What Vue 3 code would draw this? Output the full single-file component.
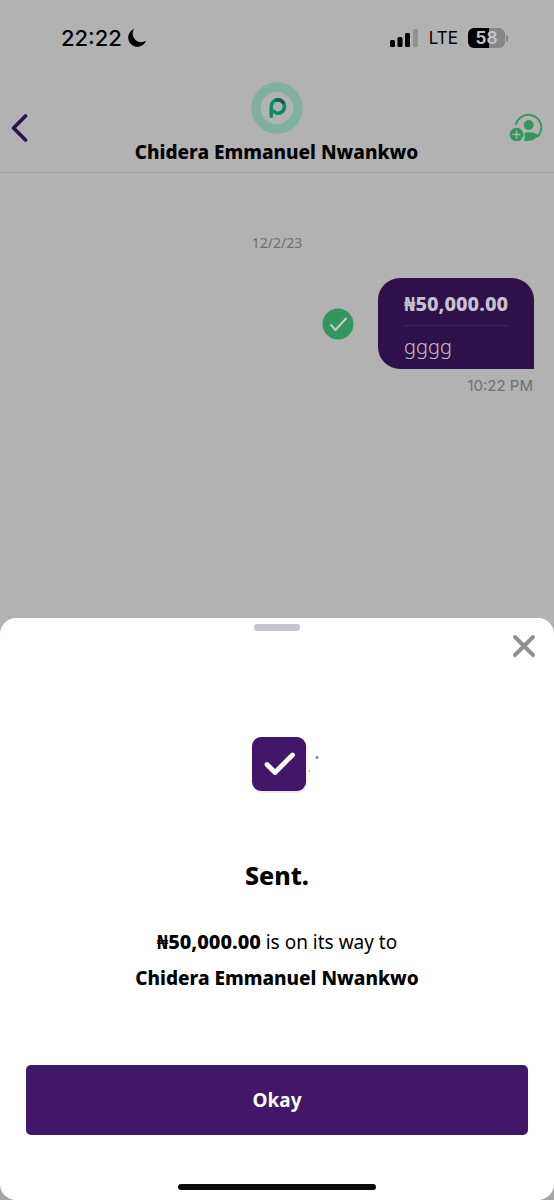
<script setup>
const recipient = 'Chidera Emmanuel Nwankwo'
const amount = '₦50,000.00'
</script>

<template>
  <div class="screen">
    <div class="status">
      <div class="clock">
        <span>22:22</span>
        <svg width="20" height="20" viewBox="0 0 20 20" aria-hidden="true">
          <path d="M7 1A9.200 9.200 0 1 0 19 12.800 8.600 8.600 0 0 1 7 1Z" fill="#000" />
        </svg>
      </div>
      <div class="signals">
        <svg width="30" height="20" viewBox="0 0 30 20" aria-hidden="true">
          <rect x="1" y="12" width="5" height="7" rx="1.5" />
          <rect x="8.500" y="9" width="5" height="10" rx="1.5" />
          <rect x="16" y="5" width="5" height="14" rx="1.5" />
          <rect x="24" y="1" width="5" height="18" rx="1.5" fill="#929292" />
        </svg>
        <span class="network">LTE</span>
        <div class="battery">
          <span class="cell">58</span>
          <span class="tip"></span>
        </div>
      </div>
    </div>

    <header class="header">
      <button class="icon-button" aria-label="Back">
        <svg width="18" height="28" viewBox="0 0 18 28">
          <path d="M15.500 2 3.500 14l12 12" fill="none" stroke="#2e114b" stroke-width="3.600" stroke-linecap="round" stroke-linejoin="round" />
        </svg>
      </button>
      <div class="person">
        <svg width="52" height="52" viewBox="0 0 52 52" aria-hidden="true">
          <circle cx="26" cy="26" r="21" fill="none" stroke="#80b0a2" stroke-width="9.500" />
          <path d="M20.300 34.300V24.500a6.600 6.700 0 1 1 6.600 6.700c-1.800 0-3-.7-3.800-1.700" fill="none" stroke="#0c8965" stroke-width="3.600" stroke-linecap="round" />
          <path d="M24.500 18.300a6.600 6.600 0 0 1 8.500 3.500" fill="none" stroke="#07644c" stroke-width="3.600" />
        </svg>
        <h1>{{ recipient }}</h1>
      </div>
      <button class="icon-button" aria-label="Add beneficiary">
        <svg width="34" height="30" viewBox="0 0 34 30">
          <path d="M6.700 12A13 13 0 0 1 32.400 14.500A13 13 0 0 1 28 24" fill="none" stroke="#32965f" stroke-width="1.900" />
          <circle cx="19.700" cy="12" r="4.900" fill="#32965f" />
          <path d="M15 28c1.200-3 .8-5 .2-7.500 2.300-1.700 8.500-1.800 14.300 1.500C26.500 27 21 28.700 15 28Z" fill="#32965f" />
          <circle cx="7.500" cy="21.500" r="6.800" fill="#32965f" />
          <path d="M7.500 17.500v8M3.500 21.500h8" stroke="#b2b2b2" stroke-width="1.600" />
        </svg>
      </button>
    </header>

    <main class="chat">
      <p class="date">12/2/23</p>
      <div class="message">
        <svg width="32" height="32" viewBox="0 0 32 32" role="img" aria-label="Delivered">
          <circle cx="16" cy="16" r="15.500" fill="#32965f" />
          <path d="m9 17 4.500 5L24 10.500" fill="none" stroke="#c4cdc6" stroke-width="2" stroke-linecap="round" stroke-linejoin="round" />
        </svg>
        <div class="bubble">
          <strong>{{ amount }}</strong>
          <span>gggg</span>
        </div>
      </div>
      <p class="time">10:22 PM</p>
    </main>

    <div class="backing">
      <section class="sheet" role="dialog" aria-labelledby="sheet-title">
        <span class="grabber"></span>
        <button class="close" aria-label="Close">
          <svg width="24" height="24" viewBox="0 0 24 24">
            <path d="m3 3 18 18M21 3 3 21" stroke="#8f908f" stroke-width="4" stroke-linecap="round" />
          </svg>
        </button>
        <svg class="badge" width="84" height="56" viewBox="0 0 84 56" aria-hidden="true">
          <rect x="18" y="2" width="54" height="54" rx="9" fill="#f8e4fb" />
          <rect x="17" y="0" width="54" height="54" rx="9" fill="#421769" />
          <path d="M32 27.500 40 35.500 57.500 18" fill="none" stroke="#fff" stroke-width="4.800" stroke-linecap="round" stroke-linejoin="round" />
          <circle cx="82" cy="20.500" r="1.200" fill="#a9a5b2" stroke="#77727f" stroke-width=".7" />
          <path d="M74.500 33v2" stroke="#b3a9bd" />
        </svg>
        <h2 id="sheet-title">Sent.</h2>
        <p class="summary"><strong class="amount">{{ amount }}</strong> is on its way to<br /><strong>{{ recipient }}</strong></p>
        <button class="okay">Okay</button>
        <span class="home"></span>
      </section>
    </div>
  </div>
</template>

<style>
body {
  background: #b2b2b2;
}
</style>

<style scoped>
.screen {
  box-sizing: border-box;
  display: flex;
  flex-direction: column;
  min-height: 100vh;
  background: #b2b2b2;
  color: #000;
  font-family: "Noto Sans", sans-serif;
}
h1, h2, p {
  margin: 0;
}
button {
  padding: 0;
  border: 0;
  background: none;
  font-family: inherit;
  cursor: pointer;
}
svg {
  display: block;
  flex: none;
}
.status {
  display: flex;
  justify-content: space-between;
  align-items: center;
  height: 28px;
  padding: 24px 46px 0 61px;
  font-family: Inter, sans-serif;
}
.clock {
  display: flex;
  align-items: center;
  gap: 5px;
  font-size: 22px;
  font-weight: 500;
}
.signals {
  display: flex;
  align-items: center;
  gap: 10px;
}
.network {
  font-size: 17px;
}
.battery {
  display: flex;
  align-items: center;
  gap: 1px;
}
.cell {
  width: 37px;
  border-radius: 6px;
  background: linear-gradient(90deg, #000 58%, #868686 58%);
  color: #c2c2c2;
  font-size: 17px;
  font-weight: 700;
  line-height: 20px;
  text-align: center;
}
.tip {
  width: 2px;
  height: 7px;
  border-radius: 0 2px 2px 0;
  background: #868686;
}
.header {
  display: flex;
  justify-content: space-between;
  align-items: center;
  padding: 30px 11px 8px 10px;
  border-bottom: 1px solid #a3a3a3;
}
.icon-button {
  width: 34px;
  padding-top: 9px;
}
.person {
  display: flex;
  flex-direction: column;
  align-items: center;
  gap: 6px;
}
.person h1 {
  font-size: 19px;
  font-weight: 800;
  line-height: 24px;
}
.chat {
  display: flex;
  flex: 1;
  flex-direction: column;
  padding: 60px 20px 24px;
}
.date, .time {
  color: #6f6f70;
  font-size: 15px;
  line-height: 20px;
}
.date {
  font-size: 14px;
  text-align: center;
}
.message {
  display: flex;
  justify-content: flex-end;
  align-items: center;
  gap: 24px;
  margin-top: 25px;
}
.bubble {
  display: flex;
  flex-direction: column;
  padding: 12px 26px 8px;
  border-radius: 22px 22px 0 22px;
  background: #2e114b;
  color: #c8bfd0;
  font-size: 20px;
}
.bubble strong {
  padding-bottom: 7px;
  border-bottom: 1px solid #3b2256;
  font-weight: 800;
  line-height: 28px;
}
.bubble span {
  padding-top: 7px;
  font-weight: 300;
  line-height: 28px;
}
.time {
  margin-top: 7px;
  padding-right: 1px;
  font-family: Inter, sans-serif;
  text-align: right;
}
.backing {
  background: linear-gradient(#b2b2b2 50%, #a6a6a6 50%);
}
.sheet {
  position: relative;
  display: flex;
  flex-direction: column;
  align-items: center;
  padding: 6px 26px 10px;
  border-radius: 16px;
  background: #fff;
}
.grabber {
  width: 46px;
  height: 7px;
  border-radius: 3px;
  background: #c5c4cd;
}
.close {
  position: absolute;
  top: 16px;
  right: 18px;
}
.badge {
  margin-top: 106px;
}
.sheet h2 {
  margin-top: 66px;
  font-size: 25px;
  font-weight: 800;
  line-height: 32px;
}
.summary {
  margin-top: 33px;
  font-size: 19px;
  line-height: 36px;
  text-align: center;
}
.summary strong {
  font-weight: 800;
}
.summary .amount {
  font-size: 20px;
}
.okay {
  align-self: stretch;
  height: 70px;
  margin-top: 69px;
  border-radius: 5px;
  background: #421769;
  color: #fff;
  font-size: 19px;
  font-weight: 700;
}
.home {
  width: 198px;
  height: 6px;
  margin-top: 49px;
  border-radius: 3px;
  background: #0b0b0b;
}
</style>
